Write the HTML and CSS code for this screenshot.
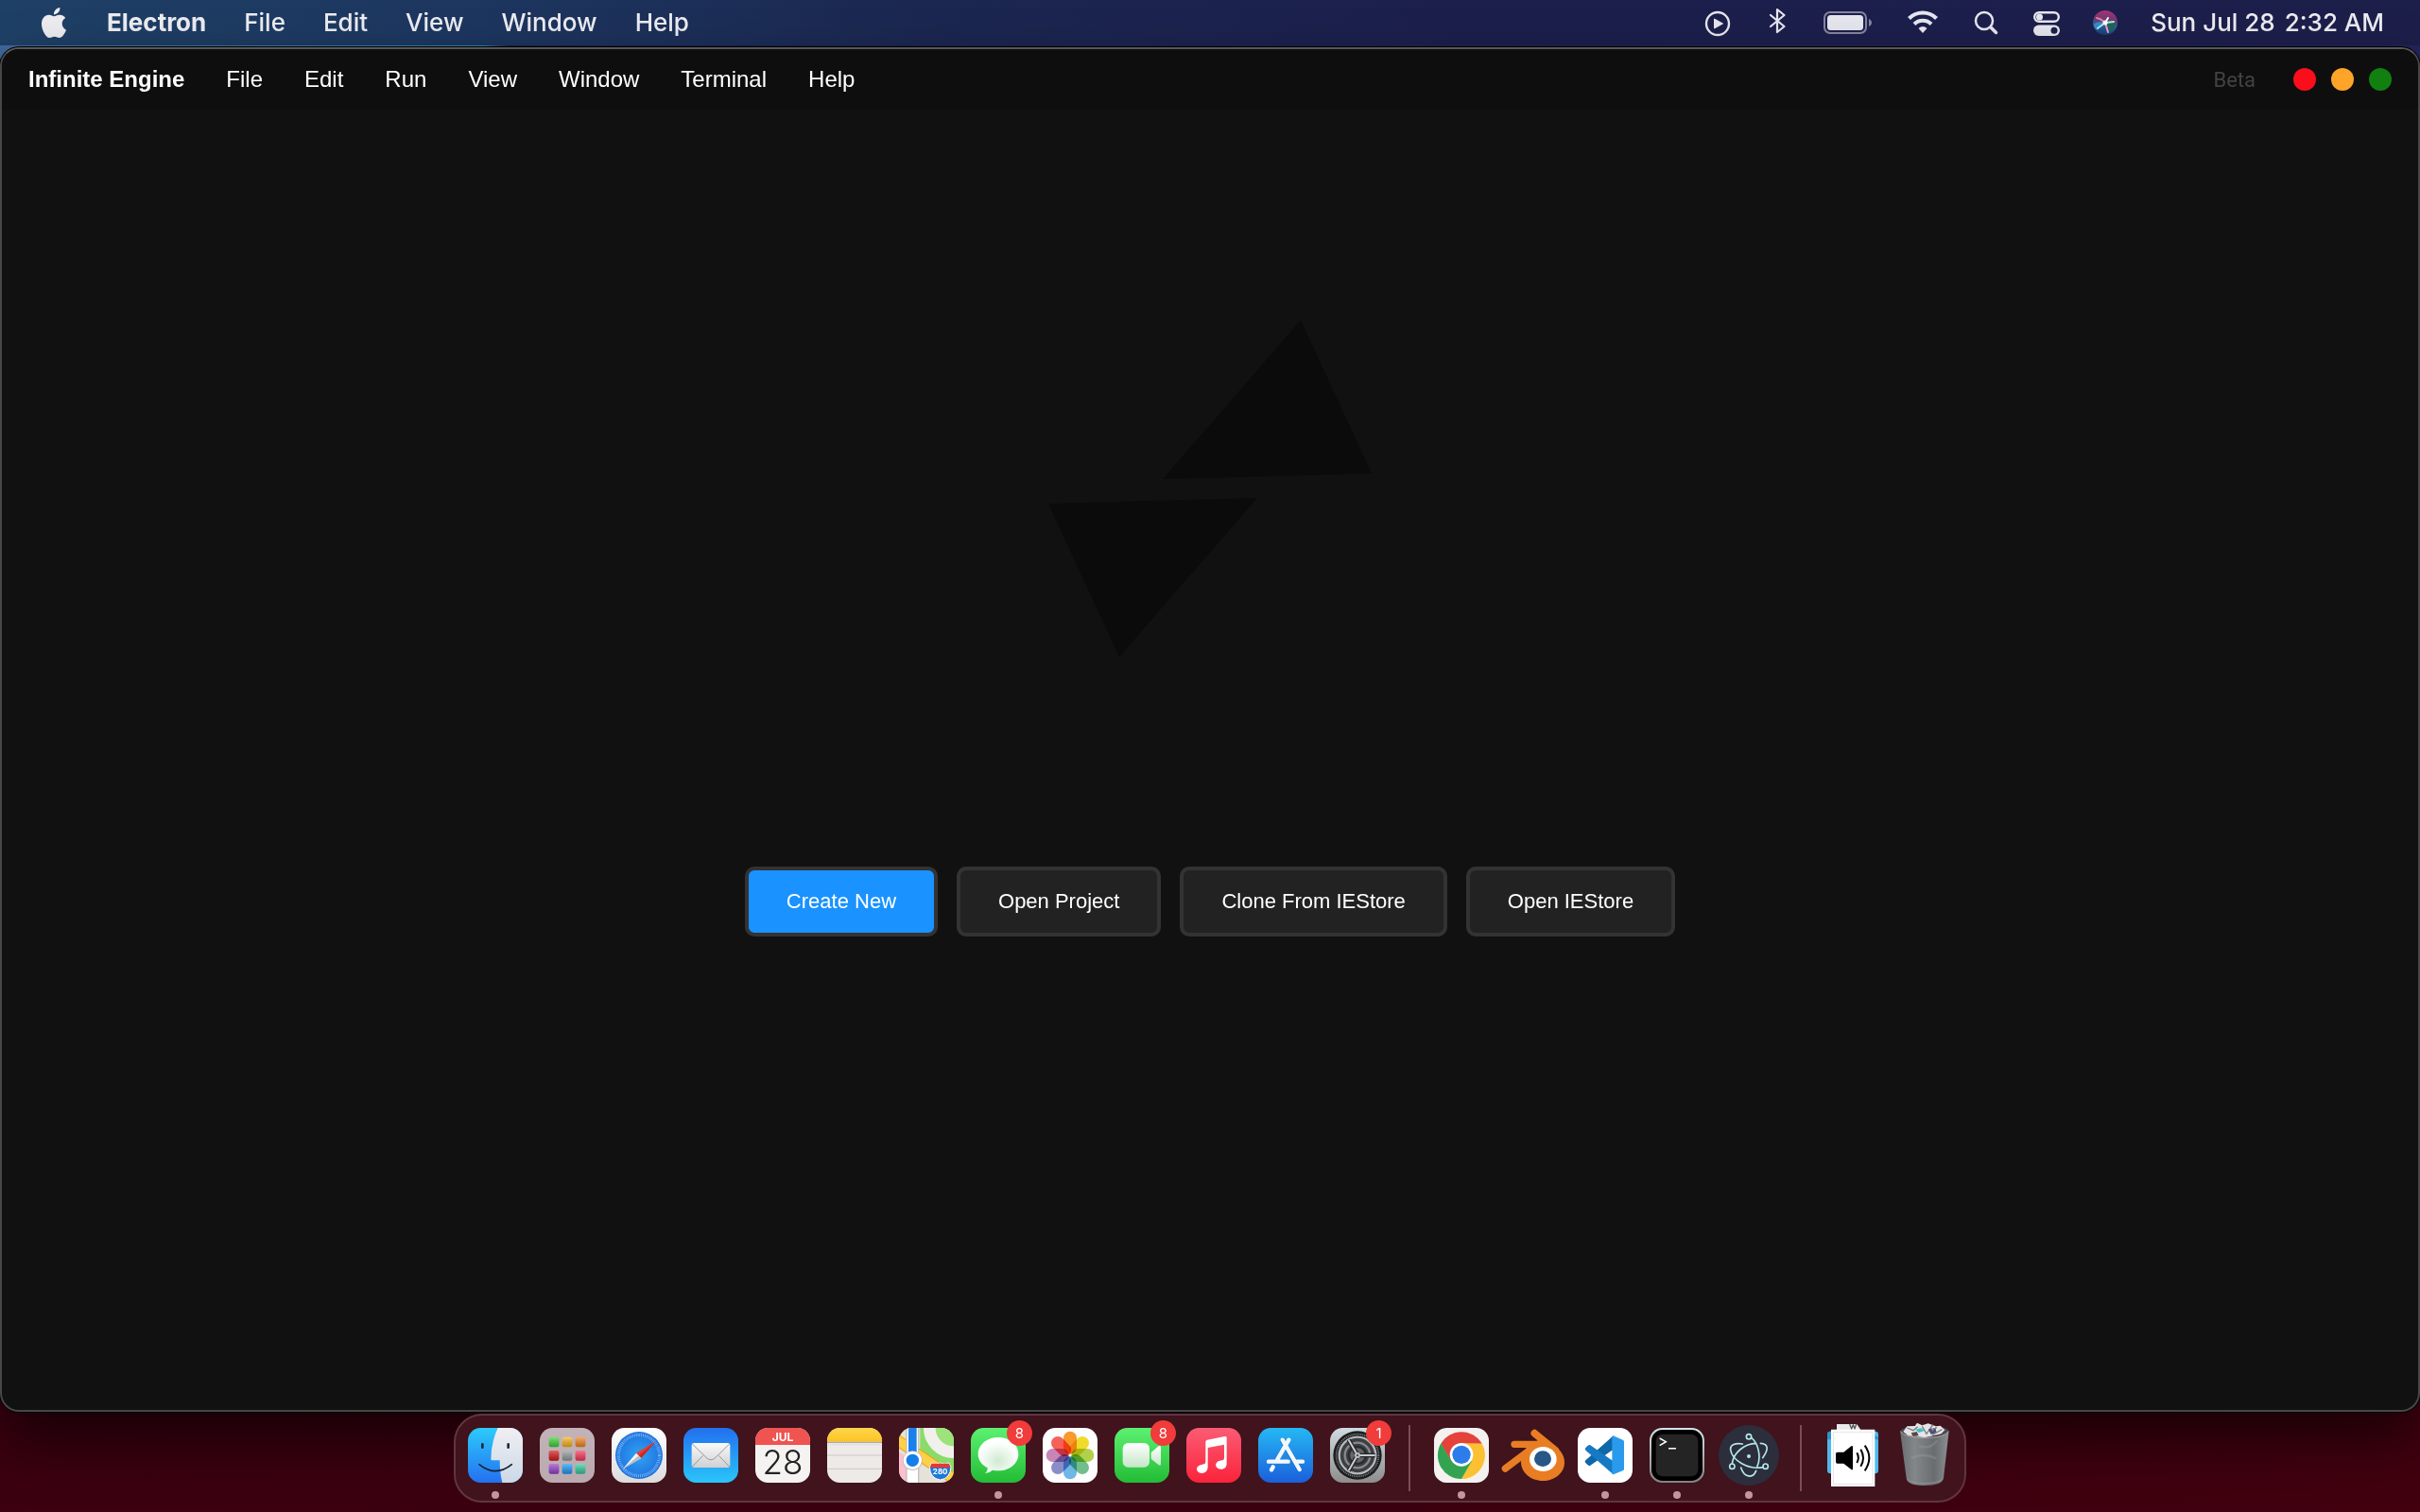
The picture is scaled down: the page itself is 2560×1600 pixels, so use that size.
FILE: index.html
```html
<!DOCTYPE html>
<html lang="en">
<head>
<meta charset="utf-8">
<title>Infinite Engine</title>
<link rel="stylesheet" href="styles.css">
</head>
<body>
<header class="menubar">
  <nav class="menubar-menus" aria-label="System menu">
    <button class="menubar-item apple" aria-label="Apple menu"><svg width="32" height="32" viewBox="0 0 24 24" fill="#ececf1"><path d="M12.152 6.896c-.948 0-2.415-1.078-3.96-1.04-2.04.027-3.91 1.183-4.961 3.014-2.117 3.675-.546 9.103 1.519 12.09 1.013 1.454 2.208 3.09 3.792 3.039 1.52-.065 2.09-.987 3.935-.987 1.831 0 2.35.987 3.96.948 1.637-.026 2.676-1.48 3.676-2.948 1.156-1.688 1.636-3.325 1.662-3.415-.039-.013-3.182-1.221-3.22-4.857-.026-3.04 2.48-4.494 2.597-4.559-1.429-2.09-3.623-2.324-4.39-2.376-2-.156-3.675 1.09-4.61 1.09zM15.53 3.83c.843-1.012 1.4-2.427 1.245-3.83-1.207.052-2.662.805-3.532 1.818-.78.896-1.454 2.338-1.273 3.714 1.338.104 2.715-.688 3.559-1.701"/></svg></button>
    <button class="menubar-item app-name">Electron</button>
    <button class="menubar-item">File</button>
    <button class="menubar-item">Edit</button>
    <button class="menubar-item">View</button>
    <button class="menubar-item">Window</button>
    <button class="menubar-item">Help</button>
  </nav>
  <div class="status">
    <svg width="28" height="48" viewBox="1806 0 28 48"><circle cx="1820" cy="25" r="12" fill="none" stroke="#e6e6ee" stroke-width="2.4"/><path d="M1816.500 20v10l9-5z" fill="#e6e6ee" stroke="#e6e6ee" stroke-linejoin="round"/></svg>
    <svg width="30" height="48" viewBox="1868 0 30 48" fill="none" stroke="#e6e6ee" stroke-width="2.2" stroke-linecap="round" stroke-linejoin="round"><path d="M1876 16l14.500 12-7.500 6V10l7.500 6L1876 28"/></svg>
    <svg width="54" height="48" viewBox="1932 0 54 48"><rect x="1933" y="13" width="44" height="22" rx="6" fill="none" stroke="#85869f" stroke-width="2"/><rect x="1936" y="16" width="38" height="16" rx="3.500" fill="#e6e6ee"/><path d="M1980 20c4 2 4 6 0 8z" fill="#85869f"/></svg>
    <svg width="34" height="48" viewBox="2019 0 34 48"><path d="M2021.500 19.500a20.500 20.500 0 0 1 29 0" fill="none" stroke="#e6e6ee" stroke-width="4.200"/><path d="M2027 25.500a12.800 12.800 0 0 1 18 0" fill="none" stroke="#e6e6ee" stroke-width="4"/><path d="M2031.500 30q4.500-4 9 0l-4.500 5z" fill="#e6e6ee"/></svg>
    <svg width="32" height="48" viewBox="2088 0 32 48" fill="none" stroke="#e6e6ee"><circle cx="2102" cy="22" r="9" stroke-width="2.500"/><path d="M2109 29l5.500 5.500" stroke-width="3.500" stroke-linecap="round"/></svg>
    <svg width="28" height="48" viewBox="2154 0 28 48"><rect x="2155.200" y="13.200" width="25.600" height="9.600" rx="4.800" fill="none" stroke="#e6e6ee" stroke-width="2.400"/><circle cx="2160.500" cy="18" r="3.500" fill="#e6e6ee"/><rect x="2154" y="26.500" width="28" height="11.500" rx="5.700" fill="#e6e6ee"/><circle cx="2176" cy="32.300" r="3.500" fill="#1d1f4b"/></svg>
    <svg width="28" height="48" viewBox="2216 0 28 48"><defs><linearGradient id="siri" x1=".5" y1="0" x2=".4" y2="1"><stop offset="0" stop-color="#a83273"/><stop offset=".4" stop-color="#6a3a72"/><stop offset=".6" stop-color="#28629d"/><stop offset="1" stop-color="#1b3b6e"/></linearGradient></defs><circle cx="2230" cy="24" r="13" fill="url(#siri)"/><path d="M2231 24l10 1q-1 6-6 9z" fill="#1e6657"/><path d="M2218 26q3-4 12-2-6 3-8 8-4-2-4-6" fill="#3f9fd8" opacity=".7"/><g stroke-linecap="round" fill="none"><path d="M2230 24q-4-4-9-5" stroke="#e57ba5" stroke-width="2"/><path d="M2230 24l9-1" stroke="#a3f0d8" stroke-width="2"/><path d="M2230 24l-8 6" stroke="#a7e9ff" stroke-width="2"/><path d="M2230 24l3 10" stroke="#f09ad5" stroke-width="2"/><path d="M2230 24l3-5" stroke="#fff" stroke-width="2"/></g><circle cx="2230" cy="24" r="2.500" fill="#fff"/></svg>
    <time class="clock"><span>Sun Jul 28</span><span>2:32 AM</span></time>
  </div>
</header>

<main class="window">
  <div class="titlebar">
    <nav class="titlebar-menus" aria-label="Application menu">
      <strong>Infinite Engine</strong>
      <button>File</button>
      <button>Edit</button>
      <button>Run</button>
      <button>View</button>
      <button>Window</button>
      <button>Terminal</button>
      <button>Help</button>
    </nav>
    <div class="window-controls">
      <span class="beta">Beta</span>
      <button class="control close" aria-label="Close"></button>
      <button class="control minimize" aria-label="Minimize"></button>
      <button class="control maximize" aria-label="Maximize"></button>
    </div>
  </div>
  <section class="welcome">
    <svg class="logo" width="344" height="356" viewBox="0 0 344 356" fill="#0b0b0b"><path d="M268 0l75 162-221 6zM1 194l221-6L76 356z"/></svg>
    <div class="actions">
      <button class="action primary">Create New</button>
      <button class="action">Open Project</button>
      <button class="action">Clone From IEStore</button>
      <button class="action">Open IEStore</button>
    </div>
  </section>
</main>

<footer class="dock-area">
  <nav class="dock" aria-label="Dock">
    <button class="dock-item running" aria-label="Finder"><svg viewBox="48 66 228 228"><defs><linearGradient id="fa" x2="0" y2="1"><stop stop-color="#2ccbfb"/><stop offset="1" stop-color="#2470f0"/></linearGradient><linearGradient id="fb" x2="0" y2="1"><stop stop-color="#f0eff2"/><stop offset="1" stop-color="#ccd8e8"/></linearGradient></defs><rect x="75" y="93" width="174" height="174" rx="40" fill="url(#fa)"/><path d="M170 93h39a40 40 0 0 1 40 40v94a40 40 0 0 1-40 40h-25q-8-32-8-71h-24q-4 0-4-4 1-56 22-99z" fill="url(#fb)"/><path d="M121 145v10M203 145v10" stroke="#1d2b3d" stroke-width="8" stroke-linecap="round"/><path d="M111 209q52 42 103 0" fill="none" stroke="#17202c" stroke-width="5" stroke-linecap="round"/></svg></button>
    <button class="dock-item" aria-label="Launchpad"><svg viewBox="276 66 228 228"><defs><linearGradient id="lp" x2="0" y2="1"><stop stop-color="#c2b3b9"/><stop offset="1" stop-color="#baaab0"/></linearGradient><linearGradient id="sh" x2="0" y2="1"><stop stop-color="#fff" stop-opacity=".3"/><stop offset="1" stop-opacity=".25"/></linearGradient></defs><rect x="303" y="93" width="174" height="174" rx="40" fill="url(#lp)"/><g><rect x="332" y="122" width="32" height="32" rx="6" fill="#45d63c"/><rect x="374" y="122" width="32" height="32" rx="6" fill="#fcb622"/><rect x="416" y="122" width="32" height="32" rx="6" fill="#f58923"/><rect x="332" y="165" width="32" height="32" rx="6" fill="#d91c20"/><rect x="374" y="165" width="32" height="32" rx="6" fill="#979fa2"/><rect x="416" y="165" width="32" height="32" rx="6" fill="#fa3c5d"/><rect x="332" y="207" width="32" height="32" rx="6" fill="#9a44ce"/><rect x="374" y="207" width="32" height="32" rx="6" fill="#219cf8"/><rect x="416" y="207" width="32" height="32" rx="6" fill="#3bcea2"/></g><g fill="url(#sh)"><rect x="332" y="122" width="32" height="32" rx="6"/><rect x="374" y="122" width="32" height="32" rx="6"/><rect x="416" y="122" width="32" height="32" rx="6"/><rect x="332" y="165" width="32" height="32" rx="6"/><rect x="374" y="165" width="32" height="32" rx="6"/><rect x="416" y="165" width="32" height="32" rx="6"/><rect x="332" y="207" width="32" height="32" rx="6"/><rect x="374" y="207" width="32" height="32" rx="6"/><rect x="416" y="207" width="32" height="32" rx="6"/></g></svg></button>
    <button class="dock-item" aria-label="Safari"><svg viewBox="504 66 228 228"><defs><linearGradient id="wg" x2="0" y2="1"><stop stop-color="#fff"/><stop offset="1" stop-color="#dcdcdc"/></linearGradient><radialGradient id="sf"><stop stop-color="#31a4f2"/><stop offset="1" stop-color="#1f72df"/></radialGradient></defs><rect x="531" y="93" width="174" height="174" rx="40" fill="url(#wg)"/><circle cx="618" cy="180" r="75" fill="url(#sf)"/><circle cx="618" cy="180" r="65" fill="none" stroke="#bfe0fb" stroke-width="10" stroke-dasharray="1.500 4.172"/><path d="M671 136l-62 37 16 16z" fill="#f1392f"/><path d="M609 173l16 16-58 34z" fill="#f4f4f6"/><path d="M671 136l-46 53-8-8z" fill="#c42a28"/><path d="M625 189l-58 34 50-42z" fill="#b9bdc6"/></svg></button>
    <button class="dock-item" aria-label="Mail"><svg viewBox="732 66 228 228"><defs><linearGradient id="ml" x2="0" y2="1"><stop stop-color="#226fee"/><stop offset="1" stop-color="#2ac5fa"/></linearGradient><linearGradient id="ev" x2="0" y2="1"><stop stop-color="#fafafa"/><stop offset="1" stop-color="#d0d0d2"/></linearGradient></defs><rect x="759" y="93" width="174" height="174" rx="40" fill="url(#ml)"/><rect x="785" y="141" width="122" height="78" rx="8" fill="url(#ev)"/><path d="M787 144l44 43q15 15 30 0l44-43M787 216l34-35M905 216l-34-35" fill="none" stroke="#94979c" stroke-width="3"/></svg></button>
    <button class="dock-item" aria-label="Calendar"><svg viewBox="960 66 228 228"><rect x="987" y="93" width="174" height="174" rx="40" fill="#f5f3f1"/><path d="M987 147v-14a40 40 0 0 1 40-40h94a40 40 0 0 1 40 40v14z" fill="#ef5450"/><text class="cal-month" x="1074" y="135">JUL</text><text class="cal-day" x="1074" y="240">28</text></svg></button>
    <button class="dock-item" aria-label="Notes"><svg viewBox="18 66 228 228"><defs><linearGradient id="nt" x2="0" y2="1"><stop stop-color="#fdd64d"/><stop offset="1" stop-color="#fcc321"/></linearGradient></defs><rect x="45" y="93" width="174" height="174" rx="40" fill="#edeae7"/><path d="M45 137v-4a40 40 0 0 1 40-40h94a40 40 0 0 1 40 40v4z" fill="url(#nt)"/><path d="M45 139h174" stroke="#a9a9ad" stroke-width="4"/><path d="M48 146h168" stroke="#aaa" stroke-width="2" stroke-dasharray="2 4"/><path d="M45 180h174M45 223h174" stroke="#cbc8c7" stroke-width="3"/></svg></button>
    <button class="dock-item" aria-label="Maps"><svg viewBox="246 66 228 228"><defs><clipPath id="mc"><rect x="273" y="93" width="174" height="174" rx="40"/></clipPath></defs><g clip-path="url(#mc)"><path d="M273 93h174v174H273z" fill="#e5e2d9"/><path d="M340 93h107v140l-107-70z" fill="#8bdb68"/><path d="M273 170l26 15v82h-26z" fill="#fbbfcd"/><path d="M299 93v174" stroke="#b7d98d" stroke-width="6"/><circle cx="447" cy="93" r="77" fill="#9be37a" stroke="#f1f0ed" stroke-width="38"/><path d="M262 128l190 130" stroke="#e8aa1e" stroke-width="36"/><path d="M262 128l190 130" stroke="#fdd04a" stroke-width="29"/><path d="M316 93v174" stroke="#c4c2be" stroke-width="42"/><path d="M316 93v174" stroke="#fff" stroke-width="34"/><path d="M316 93v100" stroke="#1c80ec" stroke-width="26"/></g><circle cx="316" cy="197" r="31" fill="#b9b9b9"/><circle cx="316" cy="196" r="29" fill="#fff"/><circle cx="316" cy="196" r="20" fill="#147ee9"/><path d="M376 204q14 7 28 0 14 7 28 0 2 8 6 13-2 37-34 41-32-4-34-41 5-6 6-13z" fill="#1f79d6" stroke="#fff" stroke-width="3"/><path d="M376 206h56l4 13h-64z" fill="#e53935"/><text class="map-shield" x="404" y="241">280</text></svg></button>
    <button class="dock-item running" aria-label="Messages"><svg viewBox="474 66 228 228"><defs><linearGradient id="gr" x2="0" y2="1"><stop stop-color="#5cf171"/><stop offset="1" stop-color="#23bc36"/></linearGradient><radialGradient id="bb" cy=".65"><stop stop-color="#d0ead2"/><stop offset="1" stop-color="#fdfffd"/></radialGradient></defs><rect x="501" y="93" width="174" height="174" rx="40" fill="url(#gr)"/><path d="M588 123c36 0 64 23 64 53s-28 53-64 53q-10 0-18-2-10 9-24 10 9-8 8-17c-19-10-30-26-30-44 0-30 28-53 64-53z" fill="url(#bb)"/></svg><span class="badge">8</span></button>
    <button class="dock-item" aria-label="Photos"><svg viewBox="702 66 228 228"><rect x="729" y="93" width="174" height="174" rx="40" fill="#fdfdfd"/><g class="petals"><rect x="795" y="104" width="42" height="72" rx="21" fill="#fa9a2c"/><rect x="795" y="104" width="42" height="72" rx="21" fill="#f2dc2c" transform="rotate(45 816 180)"/><rect x="795" y="104" width="42" height="72" rx="21" fill="#b3d34a" transform="rotate(90 816 180)"/><rect x="795" y="104" width="42" height="72" rx="21" fill="#72c08d" transform="rotate(135 816 180)"/><rect x="795" y="104" width="42" height="72" rx="21" fill="#6fb9e8" transform="rotate(180 816 180)"/><rect x="795" y="104" width="42" height="72" rx="21" fill="#8a8fcb" transform="rotate(225 816 180)"/><rect x="795" y="104" width="42" height="72" rx="21" fill="#cb86b8" transform="rotate(270 816 180)"/><rect x="795" y="104" width="42" height="72" rx="21" fill="#f8625a" transform="rotate(315 816 180)"/></g></svg></button>
    <button class="dock-item" aria-label="FaceTime"><svg viewBox="930 66 228 228"><defs><linearGradient id="cm" x2="0" y2="1"><stop stop-color="#fff"/><stop offset="1" stop-color="#c4e6c8"/></linearGradient></defs><rect x="957" y="93" width="174" height="174" rx="40" fill="url(#gr)"/><rect x="983" y="141" width="85" height="77" rx="17" fill="url(#cm)"/><path d="M1073 171l24-20q7-4 7 4v52q0 8-7 4l-24-20z" fill="url(#cm)"/></svg><span class="badge">8</span></button>
    <button class="dock-item" aria-label="Music"><svg viewBox="18 66 228 228"><defs><linearGradient id="mu" x2="0" y2="1"><stop stop-color="#fb5c74"/><stop offset="1" stop-color="#fa233b"/></linearGradient></defs><rect x="45" y="93" width="174" height="174" rx="40" fill="url(#mu)"/><path d="M106 137q0-5 5-6l56-11q6-1 6 4v82c0 11-7 18-18 18-20 0-23-24-3-27l9-2q4-1 4-5v-44l-52 10v60c0 13-7 20-18 21-21 1-23-24-3-27l9-2q5-1 5-6z" fill="#fff"/></svg></button>
    <button class="dock-item" aria-label="App Store"><svg viewBox="246 66 228 228"><defs><linearGradient id="as" x2="0" y2="1"><stop stop-color="#25b8f4"/><stop offset="1" stop-color="#1b5fdb"/></linearGradient></defs><rect x="273" y="93" width="174" height="174" rx="40" fill="url(#as)"/><g stroke="#1c63bf" stroke-opacity=".5" stroke-width="17" stroke-linecap="round"><path d="M350 133l54 93"/></g><g stroke="#f4f8fd" stroke-width="13" stroke-linecap="round"><path d="M306 200h62M396 200h18M370 131l-36 62M320 217l-5 9M350 131l54 94"/></g></svg></button>
    <button class="dock-item" aria-label="System Settings"><svg viewBox="474 66 228 228"><defs><linearGradient id="st" x2="0" y2="1"><stop stop-color="#d0dbe0"/><stop offset="1" stop-color="#8e8d8d"/></linearGradient></defs><rect x="501" y="93" width="174" height="174" rx="40" fill="url(#st)"/><circle cx="588" cy="180" r="77" fill="#1d1e20"/><circle cx="588" cy="180" r="67" fill="none" stroke="#85898b" stroke-width="5" stroke-dasharray="3 3"/><circle cx="588" cy="180" r="58" fill="#3d4042" stroke="#b4b8ba" stroke-width="7"/><circle cx="588" cy="180" r="40" fill="none" stroke="#85898b" stroke-width="7"/><circle cx="588" cy="180" r="27" fill="#626668" stroke="#292b2d" stroke-width="7"/><path d="M588 180h56M588 180l-28-49M588 180l-28 49" stroke="#25272a" stroke-width="14"/><path d="M588 180h56M588 180l-28-49M588 180l-28 49" stroke="#c8ccce" stroke-width="6"/><circle cx="588" cy="180" r="9" fill="#b9bdbf"/><circle cx="588" cy="180" r="3" fill="#333"/></svg><span class="badge">1</span></button>
    <span class="divider"></span>
    <button class="dock-item running" aria-label="Chrome"><svg viewBox="24 66 228 228"><rect x="51" y="93" width="174" height="174" rx="40" fill="#f4f1f1"/><path d="M73 143a75 75 0 0 1 130 0h-65v37l-32 20z" fill="#e4423a"/><path d="M203 143a75 75 0 0 1-65 112l32-57-32-56z" fill="#fcc033"/><path d="M73 142a75 75 0 0 0 65 113l33-57h-65z" fill="#34a351"/><circle cx="138" cy="178" r="37" fill="#fff"/><circle cx="138" cy="178" r="29" fill="#2c7de9"/></svg></button>
    <button class="dock-item" aria-label="Blender"><svg viewBox="252 66 228 228"><path d="M370 110l66 54" stroke="#e87d24" stroke-width="23" stroke-linecap="round"/><path d="M306 145h100M277 222l82-62" stroke="#e87d24" stroke-width="22" stroke-linecap="round"/><path d="M350 145l50-20 34 24c22 18 31 34 31 54 0 32-31 58-69 58s-69-26-69-60q0-12 5-22z" fill="#e87d24"/><ellipse cx="397" cy="192" rx="43" ry="39" fill="#fff"/><ellipse cx="396" cy="191" rx="27" ry="25" fill="#265787"/></svg></button>
    <button class="dock-item running" aria-label="Visual Studio Code"><svg viewBox="480 66 228 228"><rect x="507" y="93" width="174" height="174" rx="40" fill="#fff"/><path d="M620 118l2 42-75 52q-4 3-8-1l-7-7q-4-4 0-8z" fill="#0e67a8"/><path d="M620 241l2-41-75-52q-4-3-8 1l-7 7q-4 4 0 8z" fill="#1779c4"/><path d="M620 118l30 13q4 2 4 6v86q0 4-4 6l-30 12q-4 0-4-3V122q0-3 4-4z" fill="#2a9bec"/></svg></button>
    <button class="dock-item running" aria-label="Terminal"><svg viewBox="708 66 228 228"><defs><linearGradient id="tm" x2="0" y2="1"><stop stop-color="#d5e6ea"/><stop offset="1" stop-color="#858080"/></linearGradient></defs><rect x="735" y="93" width="174" height="174" rx="40" fill="url(#tm)"/><rect x="741" y="99" width="162" height="162" rx="35" fill="#000"/><rect x="755" y="113" width="134" height="134" rx="22" fill="#242424"/><path d="M767 126l20 11-20 12M795 158h24" fill="none" stroke="#fff" stroke-width="4.500"/></svg></button>
    <button class="dock-item running" aria-label="Electron"><svg viewBox="36 66 228 228"><circle cx="150" cy="180" r="96" fill="#2c2e3b"/><g fill="none" stroke="#b2e8ea" stroke-width="5" stroke-linecap="round"><circle cx="150" cy="121" r="8"/><circle cx="97" cy="215" r="8"/><circle cx="203" cy="215" r="8"/><path d="M158 124c22 18 32 60 19 91M97 206c4-34 40-64 76-64M195 218c-46 9-99-22-103-56-2-16 16-22 38-18M187 142c26 1 26 20 7 46M125 219c10 32 38 36 48 10"/></g><circle cx="150" cy="183" r="6" fill="#b2e8ea"/></svg></button>
    <span class="divider"></span>
    <button class="dock-item" aria-label="Downloads"><svg viewBox="366 66 228 228"><path d="M429 81h64l12 18h-76z" fill="#e9e9ea"/><path d="M470 81l6 14 5-12 5 12 5-14" fill="none" stroke="#555" stroke-width="4"/><rect x="399" y="104" width="162" height="134" rx="10" fill="#4fb8ea"/><path d="M399 130v-16q0-8 8-10h6v26zM561 130v-2q0-8-8-10h-6v12z" fill="#2c94cd"/><path d="M411 98h139v181H411z" fill="#fff"/><path d="M418 106h125v165H418z" fill="none" stroke="#e3e3e3" stroke-width="3"/><path d="M431 170h20l25-20q4-1 4 4v68q0 5-4 4l-25-20h-20q-5 0-5-5v-26q0-5 5-5z"/><path d="M493 172q9 16 0 32M505 161q16 27 0 54M518 149q28 39 0 80" fill="none" stroke="#000" stroke-width="6"/></svg></button>
    <button class="dock-item" aria-label="Trash"><svg viewBox="594 66 228 228"><defs><linearGradient id="tr"><stop stop-color="#6b6e70"/><stop offset=".3" stop-color="#84878a"/><stop offset=".7" stop-color="#6a6d70"/><stop offset="1" stop-color="#8d9092"/></linearGradient></defs><ellipse cx="708" cy="103" rx="76" ry="17" fill="#4b4c50"/><path d="M640 105l12-17 25-1 7-10 16 8 19-6 25 9 14-2 14 14-12 12-52 12-52-6z" fill="#e5e4e6"/><path d="M652 93l20 8 14-12M700 88l14 24 20-29M745 90l-10 24 28-16" fill="none" stroke="#7d7b80" stroke-width="4"/><path d="M678 98l20-4 8 8-16 6z" fill="#38bdd5"/><path d="M686 96l8-3 4 5z" fill="#8bd34d"/><path d="M720 97l20-3 6 12-18 8z" fill="#3d4f86"/><path d="M728 95l10 2-4 8z" fill="#d87a3d"/><path d="M665 109l18-4 6 13-18 2z" fill="#5d4543"/><path d="M630 103q14 20 78 20t77-20l-17 150q-4 23-60 23t-58-23z" fill="url(#tr)"/><path d="M631 104q14 20 77 20t76-20" fill="none" stroke="#a9acae" stroke-width="3"/><path d="M654 255q10 14 54 14t56-14" fill="none" stroke="#999c9e" stroke-width="3" opacity=".7"/><path d="M690 150q30 14 58-16M665 190q35-20 80 0" fill="none" stroke="#a2a5a7" stroke-width="7" opacity=".3"/></svg></button>
  </nav>
</footer>
</body>
</html>
```
FILE: styles.css
```css
* { box-sizing: border-box; }

body {
  margin: 0;
  min-height: 100vh;
  display: flex;
  flex-direction: column;
  color: #fff;
  font-family: "Liberation Sans", Arial, sans-serif;
  background:
    linear-gradient(90deg, #41699c, #2b86ad 20%, #1c1f52 21%, #23245c) top / 100% 200px no-repeat,
    linear-gradient(90deg, #3c0010, #3a000f 50%, #42000f);
}

button {
  padding: 0;
  border: 0;
  background: none;
  color: inherit;
  font: inherit;
  cursor: default;
}

svg { display: block; }

.menubar {
  height: 48px;
  padding: 0 38px 0 41px;
  display: flex;
  align-items: center;
  justify-content: space-between;
  color: #ececf1;
  font-family: Inter, sans-serif;
  font-size: 26px;
  font-weight: 500;
  line-height: 48px;
  white-space: nowrap;
  background: linear-gradient(90deg, #1f4066, #1d365f 20%, #1b2750 38%, #1c1f4c 60%, #1d1f4b);
}

.menubar-menus, .status { display: flex; align-items: center; }
.menubar-menus { gap: 40px; }
.status { gap: 34px; }
.menubar .app-name { font-weight: 700; }
.clock { display: flex; gap: 10px; }

.window {
  flex: 1;
  display: flex;
  flex-direction: column;
  margin-top: 2px;
  overflow: hidden;
  border: 2px solid #474747;
  border-top-color: #58585a;
  border-radius: 20px;
  background: #111;
  box-shadow: 0 0 0 1px #000, 0 30px 60px rgba(0, 0, 0, .6);
}

.titlebar {
  height: 64px;
  padding: 0 28px;
  display: flex;
  align-items: center;
  justify-content: space-between;
  font-size: 24px;
  background: #0e0e0e;
}

.titlebar-menus { display: flex; gap: 44px; }
.window-controls { display: flex; align-items: center; gap: 16px; }

.beta {
  margin-right: 24px;
  color: #424242;
  font-family: Roboto, sans-serif;
  font-size: 22px;
}

.control { width: 24px; height: 24px; border-radius: 50%; }
.close { background: #fc0d1b; }
.minimize { background: #fda429; }
.maximize { background: #118011; }

.welcome {
  flex: 1;
  display: flex;
  flex-direction: column;
  align-items: center;
  gap: 222px;
  padding-top: 223px;
}

.actions { display: flex; gap: 20px; }

.action {
  height: 74px;
  padding: 0 40px;
  border: 4px solid #333;
  border-radius: 10px;
  background: #222;
  font-size: 22px;
}

.action.primary { background: #1a92ff; }

.dock-area {
  display: flex;
  justify-content: center;
  padding: 2px 0 10px;
}

.dock {
  display: flex;
  align-items: center;
  padding: 0 4px;
  border: 2px solid #5f3641;
  border-radius: 30px;
  background: #40131d;
}

.dock-item {
  position: relative;
  width: 76px;
  height: 90px;
  padding: 4px 0 10px;
}

.dock-item svg { width: 76px; height: 76px; overflow: visible; }

.running::after {
  content: "";
  position: absolute;
  left: 34px;
  bottom: 2px;
  width: 8px;
  height: 8px;
  border-radius: 50%;
  background: #c295a1;
}

.badge {
  position: absolute;
  top: 5px;
  right: 2px;
  width: 27px;
  height: 27px;
  border-radius: 50%;
  background: #f03c3a;
  font: 15px/27px Inter, sans-serif;
  text-align: center;
}

.divider {
  width: 2px;
  height: 70px;
  margin: 0 16px;
  background: #7c4c57;
}

.petals rect { mix-blend-mode: multiply; }

.cal-month, .cal-day, .map-shield {
  font-family: Inter, sans-serif;
  text-anchor: middle;
}
.cal-month { font-size: 36px; font-weight: 700; fill: #fff; }
.cal-day { font-size: 105px; font-weight: 300; fill: #222; }
.map-shield { font-size: 24px; font-weight: 700; fill: #fff; }
```
